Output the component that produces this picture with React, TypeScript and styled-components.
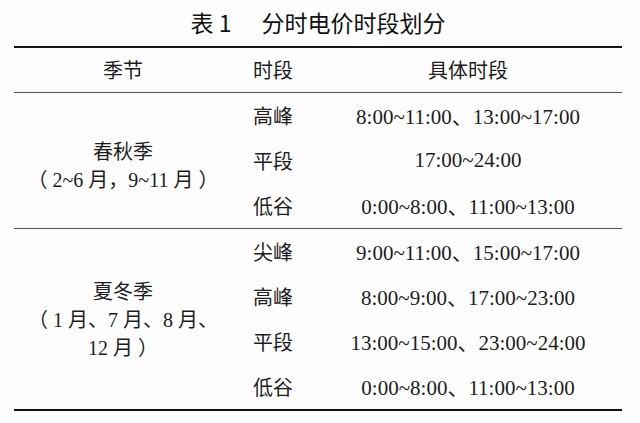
import styled, { createGlobalStyle } from "styled-components";
import { Fragment } from "react";

const GlobalStyle = createGlobalStyle`
  html, body {
    margin: 0;
    padding: 0;
    background: #fdfdfd;
  }
`;

interface Period {
  name: string;
  hours: string;
}

interface Season {
  lines: string[];
  nudge: number;
  periods: Period[];
}

const seasons: Season[] = [
  {
    lines: ["春秋季", "（2~6 月，9~11 月）"],
    nudge: 12,
    periods: [
      { name: "高峰", hours: "8:00~11:00、13:00~17:00" },
      { name: "平段", hours: "17:00~24:00" },
      { name: "低谷", hours: "0:00~8:00、11:00~13:00" },
    ],
  },
  {
    lines: ["夏冬季", "（1 月、7 月、8 月、", "12 月）"],
    nudge: 2,
    periods: [
      { name: "尖峰", hours: "9:00~11:00、15:00~17:00" },
      { name: "高峰", hours: "8:00~9:00、17:00~23:00" },
      { name: "平段", hours: "13:00~15:00、23:00~24:00" },
      { name: "低谷", hours: "0:00~8:00、11:00~13:00" },
    ],
  },
];

const Page = styled.div`
  width: 640px;
  height: 423px;
  padding-left: 14px;
  box-sizing: border-box;
  font-family: "Liberation Serif", "Noto Sans CJK SC", serif;
  color: #1c1c1c;
`;

const Title = styled.h1`
  margin: 0;
  width: 608px;
  height: 46px;
  display: flex;
  align-items: center;
  justify-content: center;
  gap: 30px;
  font-family: "Noto Sans CJK SC", "Liberation Sans", sans-serif;
  font-size: 23px;
  font-weight: 400;
  color: #111;
  padding-bottom: 2px;
  box-sizing: border-box;
`;

const Table = styled.table`
  width: 608px;
  border-collapse: separate;
  border-spacing: 0;
  border-top: 2px solid #161616;
  table-layout: fixed;
`;

const Col = styled.col<{ $w: number }>`
  width: ${(p) => p.$w}px;
`;

const HeadCell = styled.th`
  height: 43.5px;
  padding: 0;
  font-size: 20px;
  font-weight: 400;
  text-align: center;
  vertical-align: middle;
  border-bottom: 1.5px solid #555;
`;

const Cell = styled.td<{ $last?: boolean; $end?: boolean }>`
  height: 45px;
  padding: 0;
  font-size: 20px;
  text-align: center;
  vertical-align: middle;
  white-space: nowrap;
  border-bottom: ${(p) =>
    p.$end ? "2px solid #111" : p.$last ? "1.5px solid #555" : "none"};
`;

const HoursCell = styled(Cell)`
  font-size: 21px;
`;

const SeasonCell = styled(Cell)<{ $nudge: number }>`
  line-height: 28px;
  padding-top: ${(p) => p.$nudge}px;
`;

const SeasonLine = styled.div`
  display: block;
`;

const Paren = styled.span<{ $close?: boolean }>`
  display: inline-block;
  margin: ${(p) => (p.$close ? "0 0 0 5px" : "0 5px 0 0")};
`;

function renderLine(line: string) {
  return line.split(/([（）])/).map((part, i) =>
    part === "（" || part === "）" ? (
      <Paren key={i} $close={part === "）"}>
        {part}
      </Paren>
    ) : (
      part
    )
  );
}

export default function App() {
  return (
    <>
      <GlobalStyle />
      <Page>
        <Title>
          <span>表 1</span>
          <span>分时电价时段划分</span>
        </Title>
        <Table>
          <colgroup>
            <Col $w={218} />
            <Col $w={82} />
            <Col $w={308} />
          </colgroup>
          <thead>
            <tr>
              <HeadCell>季节</HeadCell>
              <HeadCell>时段</HeadCell>
              <HeadCell>具体时段</HeadCell>
            </tr>
          </thead>
          <tbody>
            {seasons.map((season, si) => {
              const end = si === seasons.length - 1;
              return (
                <Fragment key={si}>
                  {season.periods.map((period, pi) => {
                    const last = pi === season.periods.length - 1;
                    return (
                      <tr key={pi}>
                        {pi === 0 && (
                          <SeasonCell
                            rowSpan={season.periods.length}
                            $nudge={season.nudge}
                            $last
                            $end={end}
                          >
                            {season.lines.map((line) => (
                              <SeasonLine key={line}>{renderLine(line)}</SeasonLine>
                            ))}
                          </SeasonCell>
                        )}
                        <Cell $last={last} $end={end && last}>
                          {period.name}
                        </Cell>
                        <HoursCell $last={last} $end={end && last}>
                          {period.hours}
                        </HoursCell>
                      </tr>
                    );
                  })}
                </Fragment>
              );
            })}
          </tbody>
        </Table>
      </Page>
    </>
  );
}
